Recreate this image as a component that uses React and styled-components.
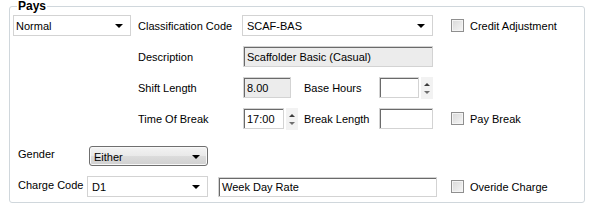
import React from "react";
import styled, { createGlobalStyle, css } from "styled-components";

const GlobalStyle = createGlobalStyle`
  body {
    margin: 0;
    background: #ffffff;
    font-family: "Liberation Sans", Arial, sans-serif;
    font-size: 11px;
    color: #000000;
  }
`;

const App = () => {
  return (
    <>
      <GlobalStyle />
      <Page>
        <GroupBox>
          <Legend>Pays</Legend>
          <TopGrid>
            <Combo width={118}>
              <span>Normal</span>
              <Arrow />
            </Combo>
            <Label>Classification Code</Label>
            <Combo width={191} span={3} pad={4}>
              <span>SCAF-BAS</span>
              <Arrow />
            </Combo>
            <Check label="Credit Adjustment" />

            <Label col={2}>Description</Label>
            <TextBox width={190} span={3} readOnly>
              Scaffolder Basic (Casual)
            </TextBox>
            <span />

            <Label col={2}>Shift Length</Label>
            <TextBox width={48} readOnly>
              8.00
            </TextBox>
            <Label>Base Hours</Label>
            <SpinGroup>
              <TextBox width={40} />
              <Spinner />
            </SpinGroup>
            <span />

            <Label col={2}>Time Of Break</Label>
            <SpinGroup>
              <TextBox width={41}>17:00</TextBox>
              <Spinner />
            </SpinGroup>
            <Label>Break Length</Label>
            <TextBox width={54} />
            <Check label="Pay Break" />
          </TopGrid>

          <BottomRows>
            <Row>
              <RowLabel>Gender</RowLabel>
              <XPCombo>
                <span>Either</span>
                <Arrow />
              </XPCombo>
            </Row>
            <Row>
              <RowLabel>Charge Code</RowLabel>
              <Combo width={121} pad={4}>
                <span>D1</span>
                <Arrow />
              </Combo>
              <TextBox width={219} wide>
                Week Day Rate
              </TextBox>
              <Check label="Overide Charge" />
            </Row>
          </BottomRows>
        </GroupBox>
      </Page>
    </>
  );
};

const Check = ({ label }) => (
  <CheckWrap>
    <CheckBox />
    <span>{label}</span>
  </CheckWrap>
);

const Spinner = () => (
  <SpinBox>
    <SpinArrow up />
    <SpinArrow />
  </SpinBox>
);

const Page = styled.div`
  width: 592px;
  height: 209px;
  padding: 0 0 0 9px;
  box-sizing: border-box;
`;

const GroupBox = styled.fieldset`
  margin: 0;
  width: 576px;
  box-sizing: border-box;
  border: 1px solid #d0d7dc;
  border-radius: 3px;
  padding: 3px 3px 5px 3px;
`;

const Legend = styled.legend`
  font-weight: bold;
  font-size: 12px;
  line-height: 12px;
  padding: 0 1px;
  margin-left: 4px;
`;

const TopGrid = styled.div`
  display: grid;
  grid-template-columns: 125px 104px 62px 74px 73px 1fr;
  grid-auto-rows: 21px;
  row-gap: 10px;
  align-items: center;
`;

const Label = styled.div`
  grid-column: ${(p) => p.col || "auto"};
  white-space: nowrap;
`;

const fieldBorder = css`
  box-sizing: border-box;
  border: 1px solid #d3d3d3;
`;

const Combo = styled.div`
  ${fieldBorder};
  grid-column: ${(p) => (p.span ? `span ${p.span}` : "auto")};
  width: ${(p) => p.width}px;
  height: 21px;
  background: #ffffff;
  display: flex;
  align-items: center;
  justify-content: space-between;
  padding: 0 7px 0 ${(p) => p.pad || 2}px;
`;

const Arrow = styled.i`
  width: 0;
  height: 0;
  border-left: 4px solid transparent;
  border-right: 4px solid transparent;
  border-top: 4px solid #000000;
`;

const TextBox = styled.div`
  ${fieldBorder};
  grid-column: ${(p) => (p.span ? `span ${p.span}` : "auto")};
  width: ${(p) => p.width}px;
  height: ${(p) => (p.wide ? 20 : 21)}px;
  margin-left: ${(p) => (p.wide ? 10 : 1)}px;
  background: ${(p) => (p.readOnly ? "#ececec" : "#ffffff")};
  box-shadow: inset 1px 1px 0 #6a6a6a;
  display: flex;
  align-items: center;
  padding-left: 3px;
  white-space: nowrap;
`;

const SpinGroup = styled.div`
  display: flex;
  align-items: center;
  gap: 2px;
`;

const SpinBox = styled.div`
  width: 12px;
  height: 22px;
  background: #f2f2f2;
  display: flex;
  flex-direction: column;
  align-items: center;
  justify-content: space-between;
  padding: 6px 0 5px;
  box-sizing: border-box;
`;

const SpinArrow = styled.i`
  width: 0;
  height: 0;
  border-left: 3px solid transparent;
  border-right: 3px solid transparent;
  ${(p) =>
    p.up
      ? "border-bottom: 3px solid #3c3c3c;"
      : "border-top: 3px solid #6f6f6f;"}
`;

const CheckWrap = styled.label`
  display: flex;
  align-items: center;
  gap: 6px;
  white-space: nowrap;
`;

const CheckBox = styled.span`
  width: 13px;
  height: 13px;
  box-sizing: border-box;
  border: 1px solid #8f8f8f;
  background: linear-gradient(135deg, #d8d8d8, #f6f6f6);
  box-shadow: inset 0 0 0 1px #f4f4f4;
`;

const BottomRows = styled.div`
  display: flex;
  flex-direction: column;
  gap: 10px;
  margin-top: 16px;
  padding-left: 5px;
`;

const Row = styled.div`
  display: flex;
  align-items: center;
  height: 21px;

  > label {
    margin-left: 14px;
  }
`;

const RowLabel = styled.div`
  width: 69px;
  margin-top: -4px;
  white-space: nowrap;
`;

const XPCombo = styled.div`
  box-sizing: border-box;
  width: 119px;
  height: 20px;
  margin-left: 2px;
  border: 1px solid #6f6f6f;
  border-radius: 3px;
  background: linear-gradient(#f3f3f3, #e9e9e9 50%, #dcdcdc 51%, #d0d0d0);
  box-shadow: inset 0 0 0 1px #f8f8f8;
  display: flex;
  align-items: center;
  justify-content: space-between;
  padding: 2px 7px 0 4px;
`;

export default App;
